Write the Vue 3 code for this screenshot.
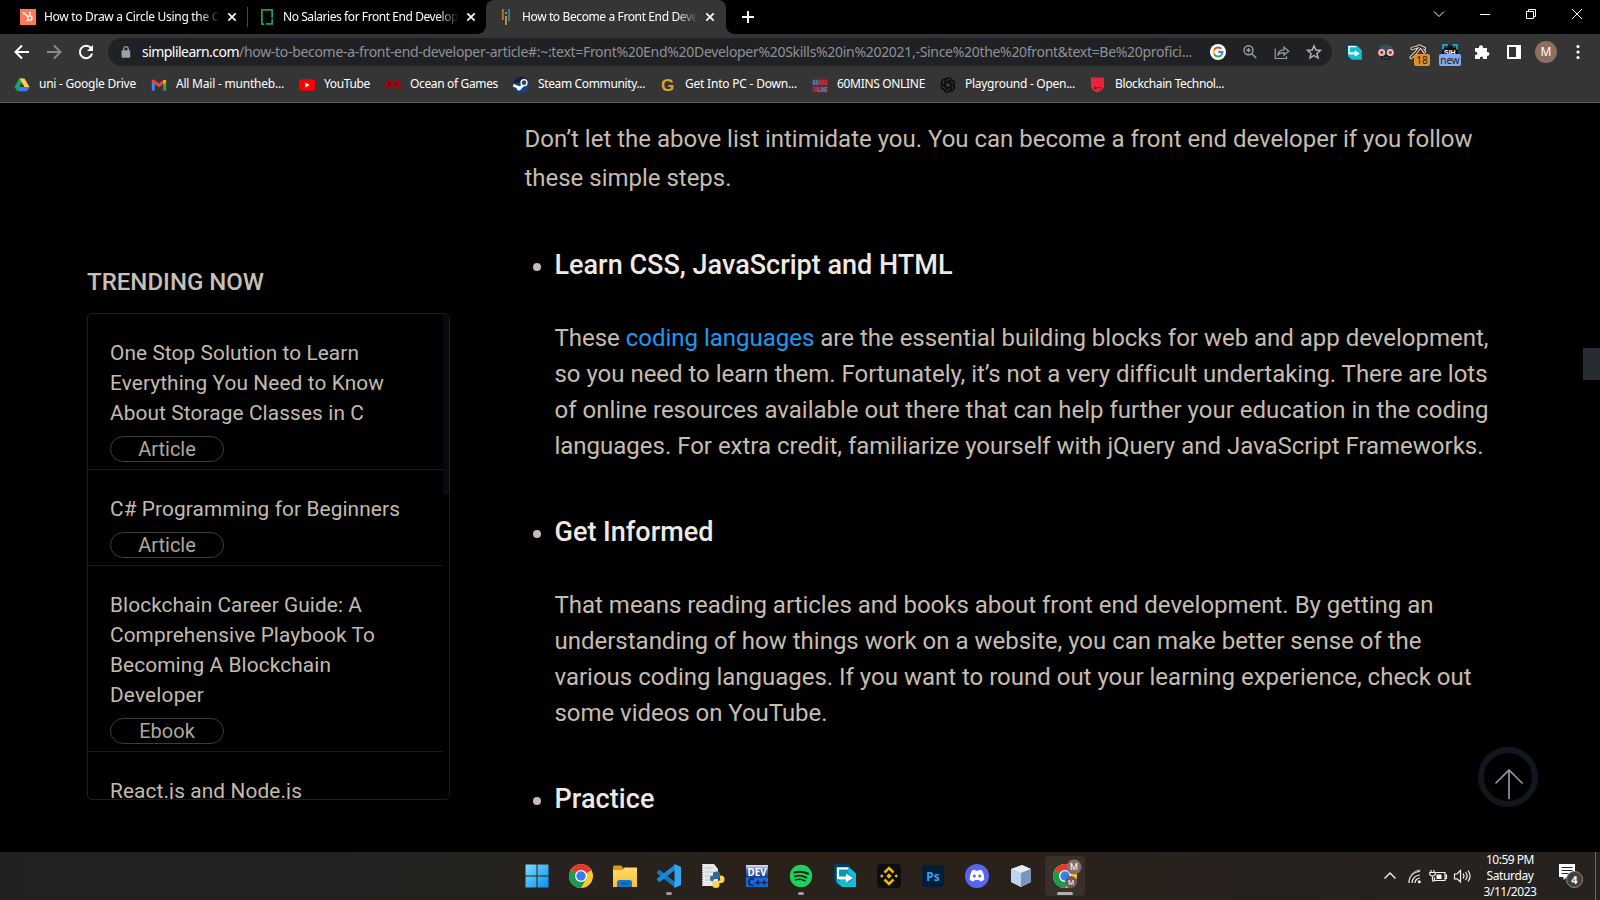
<script setup>
// Spreads the letters of a label over the given width.
const vFit = {
  mounted(el, { value }) {
    if (!value) return
    const w = el.getBoundingClientRect().width
    const n = el.textContent.length
    el.style.letterSpacing = `${(value - w) / n}px`
  },
}

const bookmarks = [
  { icon: 'drive', text: 'uni - Google Drive', w: 97, cell: 137 },
  { icon: 'gmail', text: 'All Mail - muntheb...', w: 108, cell: 148 },
  { icon: 'youtube', text: 'YouTube', w: 46, cell: 86 },
  { icon: 'ocean', text: 'Ocean of Games', w: 88, cell: 128 },
  { icon: 'steam', text: 'Steam Community...', w: 107, cell: 147 },
  { icon: 'getinto', text: 'Get Into PC - Down...', w: 112, cell: 152 },
  { icon: 'sixty', text: '60MINS ONLINE', w: 88, cell: 128 },
  { icon: 'openai', text: 'Playground - Open...', w: 110, cell: 150 },
  { icon: 'block', text: 'Blockchain Technol...', w: 109, cell: 150 },
]

const trending = [
  { lines: ['One Stop Solution to Learn', 'Everything You Need to Know', 'About Storage Classes in C'], w: [249, 274, 254], tag: 'Article' },
  { lines: ['C# Programming for Beginners'], w: [290], tag: 'Article' },
  { lines: ['Blockchain Career Guide: A', 'Comprehensive Playbook To', 'Becoming A Blockchain', 'Developer'], w: [252, 265, 221, 94], tag: 'Ebook' },
  { lines: ['React.js and Node.js'], w: [192], tag: '' },
]

const informed = [
  { t: 'That means reading articles and books about front end development. By getting an', w: 879 },
  { t: 'understanding of how things work on a website, you can make better sense of the', w: 867 },
  { t: 'various coding languages. If you want to round out your learning experience, check out', w: 917 },
  { t: 'some videos on YouTube.', w: 273 },
]
const learn = [
  { t: 'so you need to learn them. Fortunately, it’s not a very difficult undertaking. There are lots', w: 931 },
  { t: 'of online resources available out there that can help further your education in the coding', w: 934 },
  { t: 'languages. For extra credit, familiarize yourself with jQuery and JavaScript Frameworks.', w: 929 },
]
const apps = ['windows', 'chrome', 'folder', 'vscode', 'python', 'dev', 'spotify', 'stream', 'binance', 'ps', 'discord', 'cube', 'chrome2']
</script>

<template>
  <div class="screen">
    <header class="tabs">
      <div class="tab first">
        <svg class="fav" width="16" height="16" viewBox="0 0 16 16"><rect width="16" height="16" fill="#ff7a59" /><g fill="none" stroke="#fff" stroke-width="1.3"><circle cx="9.8" cy="9" r="2.2" /><path d="M9.8 6.8V3.5M8 7.6 3.6 4M8.2 10.6 6.4 12.4" /></g><circle cx="9.8" cy="3.4" r="1" fill="#fff" /><circle cx="3.6" cy="4" r="1" fill="#fff" /></svg>
        <div class="ttl"><span v-fit="175">How to Draw a Circle Using the C</span></div>
        <svg class="x" width="10" height="10" viewBox="0 0 10 10"><path d="M1.3 1.3l7.4 7.4M8.7 1.3 1.3 8.7" /></svg>
      </div>
      <i class="sep"></i>
      <div class="tab second">
        <svg class="fav" width="16" height="16" viewBox="0 0 16 16"><path d="M5 15.2H2.9V.9h10.3v8M13.2 10v4.9H7" fill="none" stroke="#1f9e50" stroke-width="1.8" /></svg>
        <div class="ttl"><span v-fit="175">No Salaries for Front End Develop</span></div>
        <svg class="x" width="10" height="10" viewBox="0 0 10 10"><path d="M1.3 1.3l7.4 7.4M8.7 1.3 1.3 8.7" /></svg>
      </div>
      <div class="tab active">
        <svg class="fav" width="16" height="16" viewBox="0 0 16 16"><path d="M4.8 0v11" stroke="#b97b35" stroke-width="1.8" /><path d="M8 3v2M8 7v9" stroke="#c89249" stroke-width="1.8" /><path d="M11 0v12" stroke="#2b87a3" stroke-width="1.8" /></svg>
        <div class="ttl"><span v-fit="176">How to Become a Front End Deve</span></div>
        <svg class="x" width="10" height="10" viewBox="0 0 10 10"><path d="M1.3 1.3l7.4 7.4M8.7 1.3 1.3 8.7" /></svg>
      </div>
      <svg class="plus" width="12" height="12" viewBox="0 0 12 12"><path d="M6 0v12M0 6h12" stroke="#fff" stroke-width="1.9" /></svg>
      <div class="winbtns">
        <svg width="46" height="28" viewBox="0 0 46 28"><path d="M18 11.5l5 5 5-5" /></svg>
        <svg width="46" height="28" viewBox="0 0 46 28"><path d="M18 14.5h10" /></svg>
        <svg width="46" height="28" viewBox="0 0 46 28"><path d="M18.5 11.5h7v7h-7zM20.500 11.500v-2h7v7h-2" /></svg>
        <svg width="46" height="28" viewBox="0 0 46 28"><path d="M18 9l10 10M28 9 18 19" /></svg>
      </div>
    </header>

    <div class="toolbar">
      <svg class="nav" width="108" height="32" viewBox="0 0 108 32" fill="none" stroke-width="2">
        <path d="M29 18H16M22 11.500 15.500 18l6.500 6.500" stroke="#fff" />
        <path d="M47 18h13M54 11.500l6.500 6.500-6.500 6.500" stroke="#8a8a8a" />
        <path d="M91 14.200A6.200 6.200 0 1 0 92.100 19.500" stroke="#fff" /><path d="M93 11v6h-6z" fill="#fff" />
      </svg>
      <div class="omni">
        <svg class="lock" width="10" height="12" viewBox="0 0 10 12"><rect x=".6" y="4.300" width="8.600" height="7.400" rx="1" fill="#9aa0a6" /><path d="M2.600 5V3a2.300 2.300 0 0 1 4.600 0v2" fill="none" stroke="#9aa0a6" stroke-width="1.300" /></svg>
        <div class="url"><b v-fit="97">simplilearn.com</b><span v-fit="953">/how-to-become-a-front-end-developer-article#:~:text=Front%20End%20Developer%20Skills%20in%202021,-Since%20the%20front&amp;text=Be%20profici...</span></div>
        <div class="omni-icons">
          <svg width="16" height="16" viewBox="0 0 16 16"><circle cx="8" cy="8" r="8" fill="#fff" /><g fill="none" stroke-width="2"><path d="M11.300 4.700A4.500 4.500 0 0 0 4.200 5.700" stroke="#ea4335" /><path d="M4.200 5.700a4.600 4.600 0 0 0 0 4.600" stroke="#fbbc05" /><path d="M4.200 10.300a4.500 4.500 0 0 0 6.700 1.100" stroke="#34a853" /><path d="M10.900 11.400c1.200-.9 1.700-2.200 1.600-3.400H8.200" stroke="#4285f4" /></g></svg>
          <svg width="16" height="16" viewBox="0 0 16 16" fill="none" stroke="#9aa0a6" stroke-width="1.400"><circle cx="6.500" cy="6.300" r="4.500" /><path d="M9.800 9.800l4.500 4.500M4.300 6.300h4.400M6.500 4.100v4.400" /></svg>
          <svg width="16" height="16" viewBox="0 0 16 16" fill="none" stroke="#9aa0a6" stroke-width="1.200"><path d="M1.200 4.500v10h11.300v-2.200M4 10.800c.3-3.300 2.500-5 6-5V3l4.700 4.200L10 11.300V8.600C7.500 8.500 5.500 9.200 4 10.800z" /></svg>
          <svg width="16" height="16" viewBox="0 0 16 16" fill="none" stroke="#b4b7ba" stroke-width="1.400"><path d="M8 1.700l1.800 4.300 4.700.4-3.600 3 1.200 4.600L8 11.500 3.900 14l1.200-4.600-3.600-3 4.700-.4z" /></svg>
        </div>
      </div>
      <div class="exts">
        <svg width="20" height="20" viewBox="0 0 28 28"><g transform="translate(2 2)"><path d="M1 0h15v22H4L1 17z" fill="#073c5c" /><path d="M3.500 3H16l7 6.500V23H9l-5.500-5z" fill="#12bed2" /><path d="M13 9.500 20 14l-7 4.500V15.500H6V12.500h7z" fill="#fff" /><path d="M5 15V4.500h10" fill="none" stroke="#fff" stroke-width="2" /></g></svg>
        <svg width="20" height="20" viewBox="0 0 20 20"><path d="M3 8.500C3 3.500 6 2.500 10 2.500s7 1.500 7 6z" fill="#33525b" /><path d="M5 13h10l-1 4.500H6z" fill="#131a1e" /><circle cx="5.700" cy="10.500" r="3.500" fill="#f0c4bf" /><circle cx="14.300" cy="10.500" r="3.500" fill="#f0c4bf" /><circle cx="5.700" cy="10.500" r="1.700" fill="#b53432" /><circle cx="14.300" cy="10.500" r="1.700" fill="#b53432" /><path d="M7 15.800h6" stroke="#6c8590" stroke-dasharray="1.500 1" /></svg>
        <div class="ext"><svg width="20" height="20" viewBox="0 0 20 20" fill="none" stroke="#ecdccd" stroke-width="3.200" stroke-linecap="round"><path d="M3 15.500 8.500 10l3.500-5M4 6.500 8 5.500l3.500-1.500 5 2.500M13 5l3.500 5" /><path d="M3 15.500 8.500 10l3.500-5M4 6.500 8 5.500l3.500-1.500 5 2.500M13 5l3.500 5" stroke="#2a2220" stroke-width="1.300" /></svg><em class="badge orange">18</em></div>
        <div class="ext"><svg width="20" height="20" viewBox="0 0 20 20"><path d="M2 6h16v11H2z" fill="#111" /><path d="M3 7.500V3h5.500M11.500 3H17v4.500" fill="none" stroke="#18a5c0" stroke-width="1.800" /><path d="M8.500 2.500v3h3v-3" fill="none" stroke="#111" stroke-width="1.500" /><text x="4" y="12.500" class="sih">SIH</text></svg><em class="badge blue">new</em></div>
        <svg width="20" height="20" viewBox="0 0 20 20"><path d="M3 6h4c-.8-3.700 4.800-3.700 4 0h4v4c3.200-.8 3.200 4.500 0 3.800V17h-4c.6-3.300-3.600-3.300-3 0H3v-4c3.200.4 3.200-3.600 0-3.200z" fill="#fff" /></svg>
        <svg width="20" height="20" viewBox="0 0 20 20"><rect x="3" y="3" width="14" height="14" fill="#fff" /><rect x="5" y="5" width="7" height="10" fill="#333" /></svg>
        <div class="avatar">M</div>
        <svg width="20" height="20" viewBox="0 0 20 20" fill="#fff"><circle cx="10" cy="4.500" r="1.600" /><circle cx="10" cy="10" r="1.600" /><circle cx="10" cy="15.500" r="1.600" /></svg>
      </div>
    </div>

    <nav class="bookmarks">
      <div v-for="b in bookmarks" :key="b.text" class="bm" :style="{ width: b.cell + 'px' }">
        <svg width="16" height="16" viewBox="0 0 16 16">
          <g v-if="b.icon === 'drive'"><path d="M5.300 1.500h5L8 5.600 3 14 .5 10z" fill="#11a860" /><path d="M5.400 1.500h5.100l5 8.500h-5z" fill="#ffcf48" /><path d="M3 14.300 5.500 10h10L13 14.300z" fill="#3b7ded" /></g>
          <g v-else-if="b.icon === 'gmail'"><path d="M.8 3.500v10h3V7z" fill="#4285f4" /><path d="M12.200 7v6.500h3v-10z" fill="#34a853" /><path d="M.8 3.800C1 2.200 2.600 2 3.600 3L8 6.500 12.300 3v4L8 10.300.8 5z" fill="#ea4335" /><path d="M12.200 3.200c1.400-1 3-.6 3 1V5l-3 2.300z" fill="#fbbc04" /></g>
          <g v-else-if="b.icon === 'youtube'"><rect y="2.300" width="16" height="11.400" rx="3" fill="#f00" /><path d="M6.400 5.500v5L10.600 8z" fill="#fff" /></g>
          <g v-else-if="b.icon === 'ocean'"><path d="M0 13c0-5 .5-9.500 3-10 2-.4 2 1 5 1s3-1.400 5-1c2.500.5 3 5 3 10-2 1-4-3-5-3H5c-1 0-3 4-5 3z" fill="#8e0c14" /><path d="M3 6.500h3M4.500 5v3M10.500 6.500h2.500" stroke="#3b0508" stroke-width="1.200" /></g>
          <g v-else-if="b.icon === 'steam'"><circle cx="8" cy="8" r="8" fill="#14457c" /><path d="M.4 6A8 8 0 0 1 15.500 5z" fill="#101f42" /><path d="M.3 8.300 7 11l4-3.500" stroke="#fff" stroke-width="2.800" fill="none" /><circle cx="11" cy="5.700" r="3" fill="#27466e" stroke="#fff" stroke-width="1.300" /><circle cx="6" cy="11.200" r="2.200" fill="#fff" /></g>
          <text v-else-if="b.icon === 'getinto'" x="1" y="14" class="gicon">G</text>
          <g v-else-if="b.icon === 'sixty'"><rect x=".5" y=".5" width="15" height="15" fill="#54303c" /><text x=".5" y="7.500" class="six" textLength="6.500" lengthAdjust="spacingAndGlyphs" fill="#6393ce">60</text><text x="6.500" y="7.500" class="six" textLength="9" lengthAdjust="spacingAndGlyphs" fill="#e8293c">MINS</text><text x=".5" y="15" class="six" textLength="6" lengthAdjust="spacingAndGlyphs" fill="#e8293c">ON</text><text x="6.500" y="15" class="six" textLength="9" lengthAdjust="spacingAndGlyphs" fill="#6393ce">LINE</text></g>
          <g v-else-if="b.icon === 'openai'" fill="none" stroke="#0b0b0b" stroke-width="1.100"><path v-for="a in 6" :key="a" :transform="`rotate(${a * 60} 8 8)`" d="M5.300 9.500V4.300C5.300.3 10 -.3 11.800 2.400M5.300 6l5.200-3 3.500 2" /></g>
          <g v-else><path d="M1 .5h13v10.200L10.500 14 7 15.500l-4-2.300L1 10z" fill="#e9253d" /><circle cx="5.500" cy="11" r="1.300" fill="#571724" /><path d="M7.500 10.500h4l-2 2" fill="none" stroke="#8f1c2c" /></g>
        </svg>
        <span v-fit="b.w">{{ b.text }}</span>
      </div>
    </nav>

    <main class="page">
      <aside class="side">
        <h2><span v-fit="177">TRENDING NOW</span></h2>
        <div class="card">
          <div v-for="(t, i) in trending" :key="i" class="item">
            <p v-for="(l, j) in t.lines" :key="l"><span v-fit="t.w[j]">{{ l }}</span></p>
            <div v-if="t.tag" class="pill">{{ t.tag }}</div>
          </div>
          <i class="thumb"></i>
        </div>
      </aside>

      <article class="article">
        <p class="intro"><span v-fit="948">Don’t let the above list intimidate you. You can become a front end developer if you follow</span><br /><span v-fit="207">these simple steps.</span></p>
        <ul>
          <li>
            <h3><span v-fit="398">Learn CSS, JavaScript and HTML</span></h3>
            <p><span v-fit="934">These <a>coding languages</a> are the essential building blocks for web and app development,</span></p>
            <p v-for="l in learn" :key="l.t"><span v-fit="l.w">{{ l.t }}</span></p>
          </li>
          <li>
            <h3><span v-fit="159">Get Informed</span></h3>
            <p v-for="l in informed" :key="l.t"><span v-fit="l.w">{{ l.t }}</span></p>
          </li>
          <li><h3><span v-fit="100">Practice</span></h3></li>
        </ul>
      </article>
      <i class="page-thumb"></i>
      <svg class="totop" width="62" height="62" viewBox="0 0 62 62" fill="none"><circle cx="31" cy="31" r="27" stroke="#11171c" stroke-width="6" /><path d="M32 53V23.500M18.500 37.500 32 24l13.500 13.500" stroke="#9492a8" stroke-width="1.700" /></svg>
    </main>

    <footer class="taskbar">
      <div class="apps">
        <div v-for="a in apps" :key="a" class="app" :class="a">
          <svg width="24" height="24" viewBox="0 0 24 24">
            <defs>
              <linearGradient id="wg" x1="0" y1="0" x2="1" y2="1"><stop stop-color="#7bdcfb" /><stop offset="1" stop-color="#0a8ef0" /></linearGradient>
              <linearGradient id="fg" x1="0" y1="0" x2="0" y2="1"><stop stop-color="#ffdc6b" /><stop offset="1" stop-color="#fcc02e" /></linearGradient>
              <linearGradient id="dg" x1="0" y1="0" x2="0" y2="1"><stop stop-color="#e4e9f6" /><stop offset=".25" stop-color="#5068b4" /><stop offset=".55" stop-color="#16398e" /><stop offset=".6" stop-color="#1b6ad6" /><stop offset="1" stop-color="#1565d0" /></linearGradient>
            </defs>
            <g v-if="a === 'windows'" fill="url(#wg)"><path d="M.5.500H11.500v11H.5zM12.500.500h11v11h-11zM.500 12.500h11v11H.500zM12.500 12.500h11v11h-11z" /></g>
            <g v-else-if="a === 'chrome' || a === 'chrome2'"><circle cx="12" cy="12" r="12" fill="#fcc934" /><path d="M12 12 1.600 6A12 12 0 0 1 22.400 6z" fill="#e5392f" /><path d="M12 6h10.400L17 9z" fill="#e5392f" /><path d="M1.600 6A12 12 0 0 0 12 24l5.200-9L12 12z" fill="#1e9a4b" /><circle cx="12" cy="12" r="6" fill="#fff" /><circle cx="12" cy="12" r="4.700" fill="#3b7df0" /><g v-if="a === 'chrome2'"><circle cx="21" cy="3" r="7.500" fill="#8b6c62" /><circle cx="18" cy="18" r="6" fill="#79594f" /><text x="21" y="6.300" class="cm">M</text><text x="18" y="20.500" class="cm small">M</text></g></g>
            <g v-else-if="a === 'folder'"><path d="M0 3q0-1.500 1.500-1.500H8L10.500 4v5H0z" fill="#d99a15" /><path d="M0 6h9.500l2-2.500H24V23H0z" fill="url(#fg)" /><path d="M4 23v-4.500Q4 16 6.500 16h10q2.500 0 2.500 2.500V23z" fill="#1775c9" /><path d="M8 19.500h7" stroke="#0d559b" stroke-width="1.500" /></g>
            <g v-else-if="a === 'vscode'"><path d="M0 8l2.500-2.200L18 18v5.500L0 9.500z" fill="#1479c2" /><path d="M0 16l2.500 2.200L18 6V.500L0 14.500z" fill="#1b8ad6" /><path d="M17.500 0 24 3v18l-6.500 3z" fill="#31a7f1" /></g>
            <g v-else-if="a === 'python'"><path d="M1 0h12l4 5v17H1z" fill="#e9e9e9" /><path d="M1.500 1v21" stroke="#555" stroke-dasharray="1 1.300" /><path d="M4 4h8M4 8h9M4 12h7M4 16h5" stroke="#c4c4c4" /><path d="M12 13V9.500q0-2 3.500-2t3.500 2V13q0 2-2 2h-3q-2 0-2 2.500-3 0-3-3t3-3z" fill="#33689a" /><path d="M19 11.500q4.500-.5 4.500 3.500t-3 4h-2V21q0 3-3.500 3t-3.500-2.500V19q0-2 2-2H17q2 0 2-2.500z" fill="#fbd44b" /></g>
            <g v-else-if="a === 'dev'"><rect x="1" y="1" width="22" height="22" fill="url(#dg)" /><text x="2.500" y="11.500" class="dev1" textLength="19" lengthAdjust="spacingAndGlyphs">DEV</text><text x="2.500" y="22" class="dev2" textLength="20" lengthAdjust="spacingAndGlyphs">C++</text></g>
            <g v-else-if="a === 'spotify'"><circle cx="12" cy="12" r="11.200" fill="#1ed05e" /><g fill="none" stroke="#14241a" stroke-linecap="round"><path d="M5.500 8.500c4.500-1.300 9.500-.8 13.500 1.300" stroke-width="2.100" /><path d="M6 12.300c4-1.100 8-.6 11.300 1.200" stroke-width="1.800" /><path d="M6.500 15.800c3.300-.8 6.500-.5 9.500 1.100" stroke-width="1.500" /></g></g>
            <g v-else-if="a === 'stream'"><path d="M1 0h15v22H4L1 17z" fill="#073c5c" /><path d="M3.500 3H16l7 6.500V23H9l-5.500-5z" fill="#12bed2" /><path d="M5 5h10v4l6 5-6 5v-3H7v2l-2-2z" fill="#0796b5" /><path d="M13 9.500 20 14l-7 4.500V15.500H6V12.500h7z" fill="#fff" /><path d="M5 15V4.500h10" fill="none" stroke="#fff" stroke-width="2" /></g>
            <g v-else-if="a === 'binance'"><rect width="24" height="24" rx="4" fill="#0c0e11" /><g fill="none" stroke="#efb90b" stroke-width="2.500"><path d="M7.500 8.500 12 4l4.500 4.500M7.500 15.500 12 20l4.500-4.500" /></g><path d="M12 9.300l2.700 2.700L12 14.700 9.300 12zM4.800 10.200 6.600 12l-1.800 1.800L3 12zM19.200 10.200 21 12l-1.800 1.800-1.800-1.800z" fill="#efb90b" /></g>
            <g v-else-if="a === 'ps'"><rect x="1" y="1" width="22" height="22" rx="4" fill="#001e36" /><text x="12" y="16.500" class="pst">Ps</text></g>
            <g v-else-if="a === 'discord'"><circle cx="12" cy="12" r="12" fill="#5865f2" /><path d="M7 6.500q2-1 3-.8l.6 1h2.800l.6-1q1-.2 3 .8 2.500 4 2.300 9-2 1.800-4 2l-1-1.500H9.700l-1 1.500q-2-.2-4-2 0-5 2.300-9z" fill="#fff" /><circle cx="9.300" cy="12" r="1.500" fill="#5865f2" /><circle cx="14.700" cy="12" r="1.500" fill="#5865f2" /></g>
            <g v-else><path d="M2 5 13 1l9 4v13l-10 5L2 18z" fill="#a9c0dc" /><path d="M2 5 13 1l9 4-10 4z" fill="#e4edf3" /><path d="M12 9l10-4v13l-10 5z" fill="#7995b8" /><path d="M2 5l10 4v14L2 18z" fill="#c0d3ee" /></g>
          </svg>
        </div>
      </div>
      <div class="tray">
        <svg width="100" height="24" viewBox="0 0 100 24" fill="none" stroke="#f2f2f2" stroke-width="1.200">
          <path d="M4.500 14.500 10 9l5.500 5.500" stroke-width="1.400" />
          <path d="M29 19a11 11 0 0 1 11-11.500M32 19a8 8 0 0 1 8-8M35 19a5 5 0 0 1 5-5" /><path d="M29.500 14.500A13 13 0 0 1 40.500 6" stroke="#aaa" /><circle cx="39.300" cy="17.800" r="1.500" fill="#fff" stroke="none" />
          <path d="M56 8.500h9v8H54.500v-3M65.500 11h1v3.500h-1M51 6v3M54 6v3M49.800 8.500h5.400v2.200q-2.700 3-5.400 0zM52.500 12v5h2" /><path d="M56.500 10.500h5v4.500h-5z" fill="#fff" stroke="none" />
          <path d="M74.500 10h2.500l3.500-3.500v11.500L77 14.800h-2.500zM83 9.500q2 2.500 0 5M85.500 8q3.200 4 0 8M88 6.500q4.200 5.500 0 11" />
        </svg>
        <div class="clock"><span v-fit="48">10:59 PM</span><span v-fit="47">Saturday</span><span v-fit="53">3/11/2023</span></div>
        <div class="notif"><svg width="28" height="28" viewBox="0 0 28 28"><path d="M2 2h16v13H10l-3.500 3v-3H2z" fill="#fff" /><path d="M4.500 5.500h11M4.500 8.500h11M4.500 11.500h7" stroke="#2a2724" stroke-width="1.200" /><circle cx="17.500" cy="17.500" r="8" fill="#413e3c" stroke="#918f8c" /><text x="17.500" y="21.800" class="nt">4</text></svg></div>
        <i class="edge"></i>
      </div>
    </footer>
  </div>
</template>

<style>
html, body { margin: 0; background: #000; overflow: hidden; }
</style>

<style scoped>
.screen { width: 1600px; height: 900px; display: flex; flex-direction: column; background: #000; overflow: hidden; font-family: "Noto Sans", "Open Sans", sans-serif; color: #fff; font-size: 12px; }
.screen svg { display: block; flex: none; overflow: visible; }
.screen span, .screen b { white-space: pre; }
.tabs { height: 34px; flex: none; display: flex; align-items: center; position: relative; }
.tab { display: flex; align-items: center; height: 34px; box-sizing: border-box; }
.tab .fav { margin-right: 8px; }
.first { width: 247px; padding-left: 20px; }
.sep { width: 1px; height: 20px; background: #4a4a4a; }
.second { width: 238px; padding-left: 11px; }
.active { width: 240px; padding-left: 12px; background: #353535; border-radius: 8px 8px 0 0; position: relative; }
.active::before, .active::after { content: ""; position: absolute; bottom: 0; width: 8px; height: 8px; }
.active::before { left: -8px; background: radial-gradient(circle at 0 0, transparent 7.500px, #353535 8px); }
.active::after { right: -8px; background: radial-gradient(circle at 100% 0, transparent 7.500px, #353535 8px); }
.ttl { width: 175px; overflow: hidden; line-height: 20px; -webkit-mask-image: linear-gradient(90deg, #000 155px, transparent 176px); mask-image: linear-gradient(90deg, #000 155px, transparent 176px); }
.x { margin-left: 8px; fill: none; stroke: #fff; stroke-width: 1.7; }
.plus { margin-left: 16px; }
.winbtns { display: flex; margin-left: auto; align-self: flex-start; }
.winbtns svg { fill: none; stroke: #fff; stroke-width: 1; }
.toolbar { height: 34px; flex: none; background: #353535; display: flex; align-items: center; }
.nav { align-self: flex-start; }
.omni { width: 1224px; height: 28px; border-radius: 14px; margin-top: 2px; background: #202124; display: flex; align-items: center; }
.lock { margin-left: 13px; }
.url { width: 1067px; margin-left: 11px; font-size: 14px; line-height: 28px; color: #8f9194; white-space: nowrap; }
.url b { font-weight: 400; color: #fff; }
.omni-icons { display: flex; gap: 16px; margin-left: 1px; }
.exts { display: flex; align-items: center; gap: 12px; margin: 2px 0 0 12px; }
.ext { position: relative; width: 20px; height: 20px; }
.badge { position: absolute; left: 6px; top: 12px; height: 12px; width: 16px; line-height: 12px; font-size: 10px; font-style: normal; text-align: center; color: #222; border-radius: 2px; }
.orange { background: #e38e2b; }
.blue { background: #82aaf5; width: 22px; left: -1px; }
.sih { font: 700 7px "Liberation Sans", sans-serif; fill: #fff; }
.avatar { width: 22px; height: 22px; border-radius: 50%; background: #8d6e63; text-align: center; line-height: 22px; margin: 0 -1px; }
.bookmarks { height: 34px; flex: none; background: #353535; border-bottom: 1px solid #5f5f5f; display: flex; align-items: center; padding-left: 14px; }
.bm { display: flex; align-items: center; gap: 9px; flex: none; line-height: 20px; }
.bm span { margin-top: -2px; }
.gicon { font: 700 17px "Liberation Sans", sans-serif; fill: #dca51f; }
.six { font: 700 8px "Liberation Sans", sans-serif; }
.page { position: relative; flex: 1; min-height: 0; overflow: hidden; display: flex; font-family: Roboto, sans-serif; background: #000; }
.side { width: 363px; margin-left: 87px; padding-top: 159px; box-sizing: border-box; flex: none; }
.side h2 { margin: 0; height: 51px; line-height: 41px; font-size: 24px; font-weight: 500; color: #c9bfb3; }
.card { position: relative; height: 485px; border: 1px solid #1d1f22; border-radius: 5px; overflow: hidden; }
.item { margin-right: 6px; padding: 24px 0 7px 22px; border-bottom: 1px solid #1a1c1e; font-size: 20.8px; color: #c4bbaf; }
.item:nth-child(4) { border-bottom: 0; }
.item p { margin: 0; line-height: 30px; }
.pill { width: 112px; height: 24px; margin-top: 8px; border: 1px solid #3b3c3e; border-radius: 13px; line-height: 24px; font-size: 20px; text-align: center; color: #b0a698; }
.thumb { position: absolute; right: 0; top: 0; width: 6px; height: 181px; background: #060b0f; border-radius: 3px; }
.article { margin-left: 74.5px; font-size: 24px; color: #c6bcb0; }
.article p { margin: 0; line-height: 36px; white-space: nowrap; }
.article .intro { padding-top: 17px; line-height: 39px; }
ul { margin: 0; padding: 0 0 0 30px; list-style: none; }
li { position: relative; height: 267px; }
li::before { content: ""; position: absolute; left: -22px; top: 65px; width: 8px; height: 8px; border-radius: 50%; background: #c6bcb0; }
h3 { margin: 0; padding-top: 49px; height: 73px; line-height: 36px; font-size: 27px; font-weight: 500; color: #efe9e1; box-sizing: content-box; }
.article a { color: #189bf5; }
.page-thumb { position: absolute; left: 1583px; top: 245px; width: 17px; height: 32px; background: #252b30; }
.totop { position: absolute; left: 1477px; top: 643px; }
.taskbar { position: relative; height: 48px; flex: none; display: flex; justify-content: space-between; background: linear-gradient(90deg, #212121, #24221f 30%, #2b211b 48%, #2a211c 68%, #25221f 88%); }
.apps { display: flex; margin-left: 517px; align-items: center; }
.app { width: 40px; height: 40px; margin-right: 4px; display: flex; align-items: center; justify-content: center; position: relative; border-radius: 4px; }
.app.vscode::after, .app.spotify::after, .app.chrome2::after { content: ""; position: absolute; bottom: 1px; left: 17px; width: 6px; height: 3px; border-radius: 2px; background: #a09c99; }
.app.chrome2 { background: #38302b; }
.app.chrome2::after { left: 12px; width: 16px; background: #b3afac; }
.cm { font: 9px Roboto, sans-serif; fill: #fff; text-anchor: middle; }
.cm.small { font-size: 7px; }
.dev1 { font: 700 11px "Noto Sans", sans-serif; fill: #fff; }
.dev2 { font: 700 11px "Noto Sans", sans-serif; fill: #0b1f56; }
.pst { font: 700 12px "Noto Sans", sans-serif; fill: #35a4f7; text-anchor: middle; }
.tray { display: flex; align-items: center; width: 220px; }
.clock { width: 60px; display: flex; flex-direction: column; align-items: center; line-height: 16px; }
.notif { margin-left: 17px; }
.nt { font: 700 11px "Noto Sans", sans-serif; fill: #fff; text-anchor: middle; }
.edge { width: 1px; height: 48px; background: #6b6966; margin-left: 10px; }
</style>
